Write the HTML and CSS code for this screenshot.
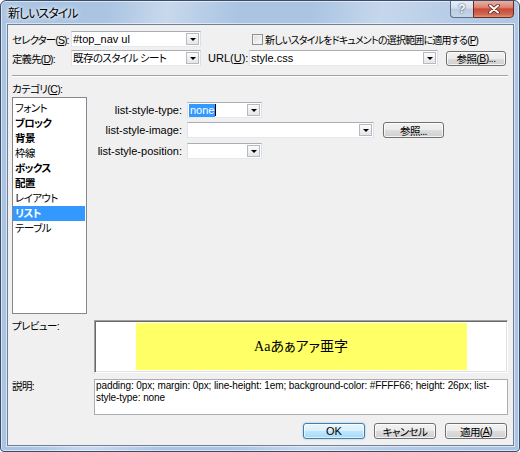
FILE: index.html
```html
<!DOCTYPE html>
<html lang="ja">
<head>
<meta charset="utf-8">
<title>新しいスタイル</title>
<link rel="stylesheet" href="styles.css">
</head>
<body>
<div class="window">
  <div class="titlebar">
    <span class="title">新しいスタイル</span>
    <div class="caption-btns">
      <div class="cap help">?</div>
      <div class="cap close">
        <svg width="12" height="10" viewBox="0 0 12 10">
          <path d="M2 1.5 L10 8.5 M10 1.5 L2 8.5" stroke="#5a2620" stroke-width="3.6" stroke-linecap="round" fill="none"/>
          <path d="M2 1.5 L10 8.5 M10 1.5 L2 8.5" stroke="#ffffff" stroke-width="2" stroke-linecap="round" fill="none"/>
        </svg>
      </div>
    </div>
  </div>
  <div class="client">
    <div class="row r1">
      <span class="lbl top-lbl jp">セレクター(<u>S</u>):</span>
      <div class="combo w130"><span class="val">#top_nav ul</span><span class="dd"></span></div>
      <div class="chk-wrap"><span class="chk"></span><span class="chk-lbl jp">新しいスタイルをドキュメントの選択範囲に適用する(<u>P</u>)</span></div>
    </div>
    <div class="row r2">
      <span class="lbl top-lbl jp">定義先(<u>D</u>):</span>
      <div class="combo w130"><span class="val jp">既存のスタイル シート</span><span class="dd"></span></div>
      <span class="lbl url-lbl">URL(<u>U</u>):</span>
      <div class="combo w189"><span class="val">style.css</span><span class="dd"></span></div>
      <div class="btn browse1 jp">参照(<u>B</u>)...</div>
    </div>
    <div class="sep"></div>
    <div class="cat-lbl jp">カテゴリ(<u>C</u>):</div>
    <div class="main">
      <div class="listbox">
        <div class="item jp">フォント</div>
        <div class="item jp bold">ブロック</div>
        <div class="item jp bold">背景</div>
        <div class="item jp">枠線</div>
        <div class="item jp bold">ボックス</div>
        <div class="item jp bold">配置</div>
        <div class="item jp">レイアウト</div>
        <div class="item jp bold selected">リスト</div>
        <div class="item jp">テーブル</div>
      </div>
      <div class="props">
        <div class="prow">
          <span class="plbl">list-style-type:</span>
          <div class="combo w75"><span class="val"><span class="hl">none</span><span class="caret"></span></span><span class="dd"></span></div>
        </div>
        <div class="prow p2">
          <span class="plbl">list-style-image:</span>
          <div class="combo w187"><span class="val"></span><span class="dd"></span></div>
          <div class="btn browse2 jp">参照...</div>
        </div>
        <div class="prow p3">
          <span class="plbl">list-style-position:</span>
          <div class="combo w75"><span class="val"></span><span class="dd"></span></div>
        </div>
      </div>
    </div>
    <div class="prev-row">
      <span class="side-lbl jp">プレビュー:</span>
      <div class="preview"><div class="sample">Aaあぁアァ亜字</div></div>
    </div>
    <div class="desc-row">
      <span class="side-lbl desc-lbl jp">説明:</span>
      <div class="desc">padding: 0px; margin: 0px; line-height: 1em; background-color: #FFFF66; height: 26px; list-<br>style-type: none</div>
    </div>
    <div class="btn-row">
      <div class="btn dlg default">OK</div>
      <div class="btn dlg jp">キャンセル</div>
      <div class="btn dlg jp">適用(<u>A</u>)</div>
    </div>
  </div>
</div>
</body>
</html>
```
FILE: styles.css
```css
html, body {
  margin: 0;
  padding: 0;
  background: #ffffff;
}
body {
  font-family: "Liberation Sans", "Noto Sans CJK JP", sans-serif;
  font-size: 11px;
  font-feature-settings: "palt";
  color: #000;
}
u { text-decoration: underline; text-underline-offset: 1px; }
.jp {
  font-size: 10.5px;
  letter-spacing: -0.6px;
}

.window {
  width: 520px;
  height: 452px;
  box-sizing: border-box;
  border: 1px solid #3a4e6c;
  border-radius: 6px 6px 4px 4px;
  background:
    linear-gradient(100deg, rgba(255,255,255,0) 18%, rgba(255,255,255,.35) 28%, rgba(255,255,255,0) 40%, rgba(255,255,255,0) 52%, rgba(255,255,255,.32) 64%, rgba(255,255,255,.1) 80%, rgba(255,255,255,0) 92%),
    #aac4e2;
  box-shadow: inset 0 0 0 1px rgba(255,255,255,.55);
  display: flex;
  flex-direction: column;
  overflow: hidden;
}

.titlebar {
  height: 23px;
  display: flex;
  align-items: flex-start;
  flex: none;
}
.title {
  margin-left: 7px;
  line-height: 24px;
  font-family: "Noto Sans CJK JP", sans-serif;
  font-size: 12px;
  letter-spacing: -1px;
  color: #000;
  text-shadow: 0 0 6px #fff, 0 0 4px #fff;
}
.caption-btns {
  margin-left: auto;
  margin-right: 5px;
  display: flex;
  margin-top: -1px;
}
.cap {
  height: 18px;
  box-sizing: border-box;
  display: flex;
  align-items: center;
  justify-content: center;
}
.help {
  width: 23px;
  border: 1px solid #5d6e86;
  border-right: none;
  border-radius: 0 0 0 4px;
  background: linear-gradient(#e8eef7 0%, #d3dfee 45%, #b9cbe1 50%, #c7d7ea 100%);
  color: #fff;
  font-family: "Liberation Sans", sans-serif;
  font-weight: bold;
  font-size: 12px;
  text-shadow: 0 0 1px #44556c, 0 0 2px #44556c;
}
.close {
  width: 41px;
  border: 1px solid #6a2a22;
  border-radius: 0 0 4px 0;
  background: linear-gradient(#eab0a3 0%, #dc8272 40%, #c84a36 50%, #d06a54 85%, #e0957f 100%);
}

.client {
  flex: 1;
  margin: 0 5px 5px 6px;
  border: 1px solid #6f7f98;
  box-shadow: 0 0 0 1px rgba(255,255,255,.55);
  background: #f0f0f0;
  padding: 0 5px 0 4px;
  display: flex;
  flex-direction: column;
}

.row {
  display: flex;
  align-items: center;
  height: 16px;
}
.r1 { margin-top: 6px; }
.r2 { margin-top: 3px; }
.lbl { white-space: nowrap; }
.top-lbl { width: 59px; flex: none; letter-spacing: -0.9px; }
.url-lbl { width: 41px; margin-left: 7px; flex: none; }

.combo {
  height: 16px;
  box-sizing: border-box;
  border: 1px solid #abadb3;
  border-color: #abadb3 #dbdfe6 #e3e9ef #e2e3ea;
  background: #fff;
  display: flex;
  align-items: center;
  flex: none;
}
.w130 { width: 130px; }
.w189 { width: 189px; }
.w75 { width: 75px; }
.w187 { width: 187px; }
.val {
  flex: 1;
  padding-left: 1px;
  white-space: nowrap;
  overflow: hidden;
  display: flex;
  align-items: center;
  line-height: 14px;
}
.dd {
  width: 13px;
  height: 12px;
  box-sizing: border-box;
  margin-right: 1px;
  border: 1px solid #b5b9c2;
  background: linear-gradient(#fbfbfb, #e6e6e6);
  display: flex;
  align-items: center;
  justify-content: center;
  flex: none;
}
.dd::after {
  content: "";
  width: 0;
  height: 0;
  border-left: 3px solid transparent;
  border-right: 3px solid transparent;
  border-top: 3px solid #000;
  margin-top: 1px;
}

.chk-wrap {
  margin-left: 51px;
  display: flex;
  align-items: center;
}
.chk {
  width: 11px;
  height: 11px;
  box-sizing: border-box;
  border: 1px solid #8f8f8f;
  background: linear-gradient(135deg, #dcdcdc, #fbfbfb);
  box-shadow: inset 0 0 0 1px #f4f4f4;
  margin-right: 2px;
  flex: none;
}
.chk-lbl { white-space: nowrap; font-size: 10px; letter-spacing: -0.8px; }

.btn {
  box-sizing: border-box;
  border: 1px solid #707070;
  border-radius: 3px;
  background: linear-gradient(#f2f2f2 0%, #ebebeb 50%, #dddddd 51%, #cfcfcf 100%);
  box-shadow: inset 0 0 0 1px rgba(255,255,255,.75);
  display: flex;
  align-items: center;
  justify-content: center;
  white-space: nowrap;
  flex: none;
}
.browse1 { width: 60px; height: 15px; margin-left: 8px; }
.browse2 { width: 61px; height: 16px; margin-left: 9px; }

.sep {
  margin-top: 9px;
  height: 0;
  border-top: 1px solid #a0a0a0;
  border-bottom: 1px solid #ffffff;
}
.cat-lbl {
  margin-top: 6px;
  line-height: 13px;
  height: 13px;
}

.main {
  margin-top: 1px;
  display: flex;
  height: 217px;
}
.listbox {
  width: 75px;
  height: 217px;
  box-sizing: border-box;
  border: 1px solid #828790;
  background: #fff;
  padding: 3px 1px 0 0;
  flex: none;
}
.item {
  height: 15px;
  line-height: 15px;
  padding-left: 2px;
  white-space: nowrap;
}
.bold { font-weight: bold; }
.selected { background: #3399ff; color: #fff; }

.props {
  display: flex;
  flex-direction: column;
  padding-top: 5px;
}
.prow {
  display: flex;
  align-items: center;
  height: 16px;
}
.p2 { margin-top: 4px; }
.p3 { margin-top: 5px; }
.plbl {
  width: 95px;
  margin-right: 5px;
  text-align: right;
  white-space: nowrap;
  flex: none;
}
.hl {
  background: #3399ff;
  color: #fff;
  padding: 0 1px;
  line-height: 13px;
}
.caret {
  width: 1px;
  height: 12px;
  background: #000;
}

.prev-row {
  margin-top: 6px;
  display: flex;
  height: 53px;
}
.side-lbl {
  width: 82px;
  flex: none;
  line-height: 12px;
}
.preview {
  width: 414px;
  height: 53px;
  box-sizing: border-box;
  border: 1px solid;
  border-color: #a0a0a0 #ffffff #ffffff #a0a0a0;
  box-shadow: inset 1px 1px 0 #696969, inset -1px -1px 0 #e3e3e3;
  background: #fff;
  padding: 1px 2px 0 2px;
}
.sample {
  width: 331px;
  height: 47px;
  margin: 1px auto 0;
  background: #ffff66;
  font-family: "Liberation Serif", "Noto Sans CJK JP", serif;
  font-size: 14px;
  line-height: 47px;
  text-align: center;
  white-space: nowrap;
}

.desc-row {
  margin-top: 6px;
  display: flex;
  height: 36px;
}
.desc-lbl { padding-top: 1px; }
.desc {
  width: 414px;
  height: 36px;
  box-sizing: border-box;
  border: 1px solid #abadb3;
  background: #fff;
  padding: 0 2px 0 1px;
  font-size: 10px;
  letter-spacing: -0.1px;
  line-height: 12px;
  white-space: nowrap;
}

.btn-row {
  margin-top: 8px;
  display: flex;
  justify-content: flex-end;
  gap: 9px;
  padding-right: 1px;
}
.dlg {
  width: 62px;
  height: 16px;
}
.default {
  border-color: #3c7fb1;
  background: linear-gradient(#eaf6fd 0%, #d9f0fc 50%, #bee6fd 51%, #a7d9f5 100%);
  box-shadow: inset 0 0 0 1px rgba(255,255,255,.6), 0 0 2px rgba(60,127,177,.5);
}
```
